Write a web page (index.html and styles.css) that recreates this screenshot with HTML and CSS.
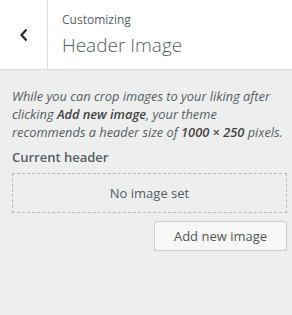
FILE: index.html
```html
<!DOCTYPE html>
<html lang="en">
<head>
<meta charset="UTF-8">
<title>Header Image</title>
<link rel="stylesheet" href="styles.css">
</head>
<body>

<div class="panel">
  <div class="panel-header">
    <button class="back-button" aria-label="Back">
      <svg width="10" height="14" viewBox="0 0 10 14"><path d="M7.5 1.5 L2.5 7 L7.5 12.5" fill="none" stroke="#23282d" stroke-width="2.2"/></svg>
    </button>
    <div class="panel-title">
      <span class="crumb">Customizing</span>
      <h3 class="title">Header Image</h3>
    </div>
  </div>

  <div class="panel-body">
    <p class="description">While you can crop images to your liking after clicking <b>Add new image</b>, your theme recommends a header size of <b>1000 &times; 250</b> pixels.</p>
    <span class="label">Current header</span>
    <div class="placeholder">No image set</div>
    <div class="actions">
      <button class="button">Add new image</button>
    </div>
  </div>
</div>

</body>
</html>
```

FILE: styles.css
```css
body {
  margin: 0;
  font-family: "Open Sans", "Noto Sans", sans-serif;
  background-color: #eee;
  color: #555d66;
}
.panel-header {
  display: flex;
  height: 69px;
  background-color: #fff;
  border-bottom: 1px solid #ddd;
}
.back-button {
  width: 48px;
  padding: 0;
  border: none;
  border-right: 1px solid #ddd;
  background: #fff;
  display: flex;
  align-items: center;
  justify-content: center;
}
.panel-title {
  padding: 11px 14px 10px;
}
.crumb {
  display: block;
  font-size: 12px;
  line-height: 18px;
}
.title {
  margin: 3px 0 0;
  font-size: 19px;
  font-weight: 300;
  line-height: 26px;
}
.panel-body {
  padding: 17px 5px 0 12px;
}
.description {
  margin: 0 0 6px;
  font-size: 12.8px;
  font-style: italic;
  line-height: 18px;
  color: #555d66;
}
.description b {
  font-weight: 600;
  color: #444;
}
.label {
  display: block;
  font-size: 13px;
  font-weight: 600;
  line-height: 20px;
  color: #555d66;
  margin-bottom: 6px;
}
.placeholder {
  height: 38px;
  border: 1px dashed #b4b9be;
  display: flex;
  align-items: center;
  justify-content: center;
  font-size: 13px;
}
.actions {
  display: flex;
  justify-content: flex-end;
  margin-top: 8px;
}
.button {
  width: 133px;
  height: 30px;
  background-color: #f7f7f7;
  border: 1px solid #ccc;
  border-radius: 3px;
  box-shadow: 0 1px 0 #ccc;
  font-family: inherit;
  font-size: 13px;
  color: #555;
  cursor: pointer;
}
```
